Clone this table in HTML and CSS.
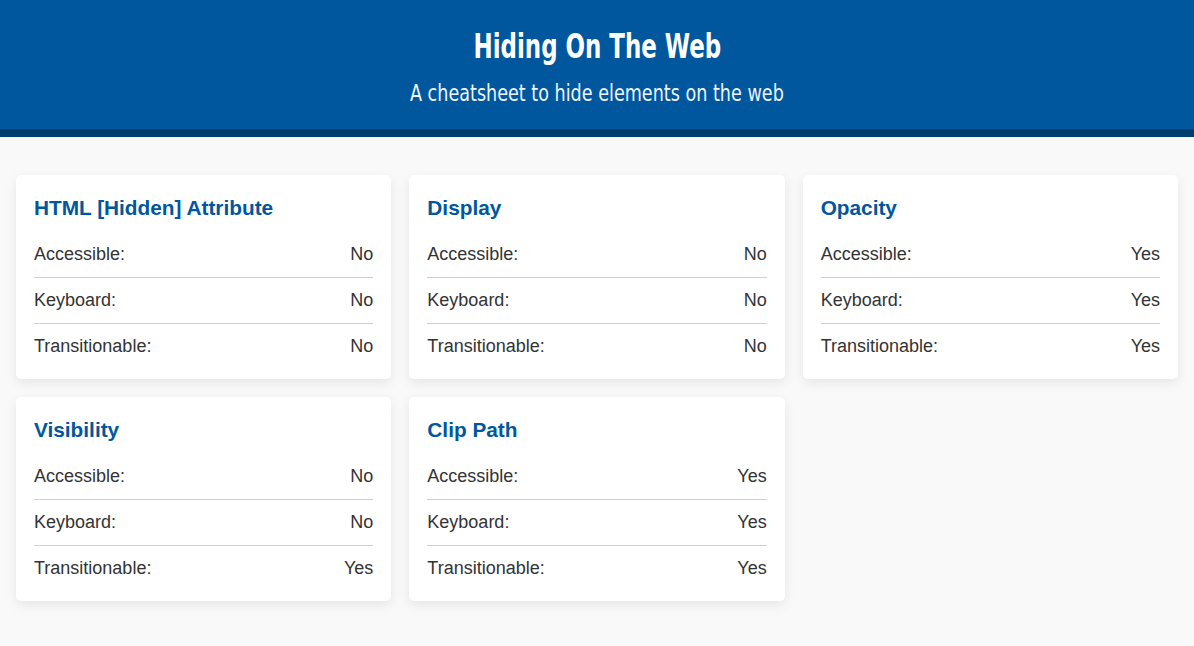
FILE: index.html
```html
<!DOCTYPE html>
<html lang="en">
<head>
<meta charset="utf-8">
<title>Hiding On The Web</title>
<link rel="stylesheet" href="styles.css">
</head>
<body>
<header class="site-header">
  <h1 class="site-title"><span class="narrow narrow-title">Hiding On The Web</span></h1>
  <p class="site-subtitle"><span class="narrow narrow-sub">A cheatsheet to hide elements on the web</span></p>
</header>
<main class="grid">
  <section class="card">
    <h2 class="card-title">HTML [Hidden] Attribute</h2>
    <div class="row"><span>Accessible:</span><span>No</span></div>
    <div class="row"><span>Keyboard:</span><span>No</span></div>
    <div class="row"><span>Transitionable:</span><span>No</span></div>
  </section>
  <section class="card">
    <h2 class="card-title">Display</h2>
    <div class="row"><span>Accessible:</span><span>No</span></div>
    <div class="row"><span>Keyboard:</span><span>No</span></div>
    <div class="row"><span>Transitionable:</span><span>No</span></div>
  </section>
  <section class="card">
    <h2 class="card-title">Opacity</h2>
    <div class="row"><span>Accessible:</span><span>Yes</span></div>
    <div class="row"><span>Keyboard:</span><span>Yes</span></div>
    <div class="row"><span>Transitionable:</span><span>Yes</span></div>
  </section>
  <section class="card">
    <h2 class="card-title">Visibility</h2>
    <div class="row"><span>Accessible:</span><span>No</span></div>
    <div class="row"><span>Keyboard:</span><span>No</span></div>
    <div class="row"><span>Transitionable:</span><span>Yes</span></div>
  </section>
  <section class="card">
    <h2 class="card-title">Clip Path</h2>
    <div class="row"><span>Accessible:</span><span>Yes</span></div>
    <div class="row"><span>Keyboard:</span><span>Yes</span></div>
    <div class="row"><span>Transitionable:</span><span>Yes</span></div>
  </section>
</main>
</body>
</html>
```

FILE: styles.css
```css
* { box-sizing: border-box; }
html, body { margin: 0; padding: 0; }
body {
  background: #f9f9f9;
  font-family: "Liberation Sans", Arial, sans-serif;
  color: #333;
}
.site-header {
  background: #00579d;
  border-bottom: 8px solid #003e6f;
  text-align: center;
  color: #fff;
  padding: 26px 16px 0;
  height: 137px;
}
.site-title {
  margin: 0;
  font-family: "DejaVu Sans Condensed", "DejaVu Sans", sans-serif;
  font-weight: 700;
  font-size: 33px;
  line-height: 42px;
}
.site-subtitle {
  margin: 9px 0 0;
  font-family: "DejaVu Sans Condensed", "DejaVu Sans", sans-serif;
  font-weight: 400;
  font-size: 23px;
  line-height: 32px;
  color: #eef4fb;
}
.narrow {
  display: inline-block;
  white-space: nowrap;
}
.narrow-title { transform: scaleX(0.772); }
.narrow-sub { transform: scaleX(0.85); }
.grid {
  display: grid;
  grid-template-columns: repeat(3, 1fr);
  gap: 18px;
  padding: 38px 16px 16px;
}
.card {
  background: #fff;
  border-radius: 5px;
  box-shadow: 0 4px 12px rgba(0, 0, 0, 0.08);
  padding: 18px 18px 10px;
}
.card-title {
  margin: 0 0 9px;
  font-size: 20.8px;
  line-height: 30px;
  font-weight: 700;
  color: #00579d;
}
.row {
  display: flex;
  justify-content: space-between;
  font-size: 18px;
  line-height: 23px;
  padding: 11px 0;
  border-bottom: 1px solid #cfcfcf;
}
.row:last-child { border-bottom: none; }
```
